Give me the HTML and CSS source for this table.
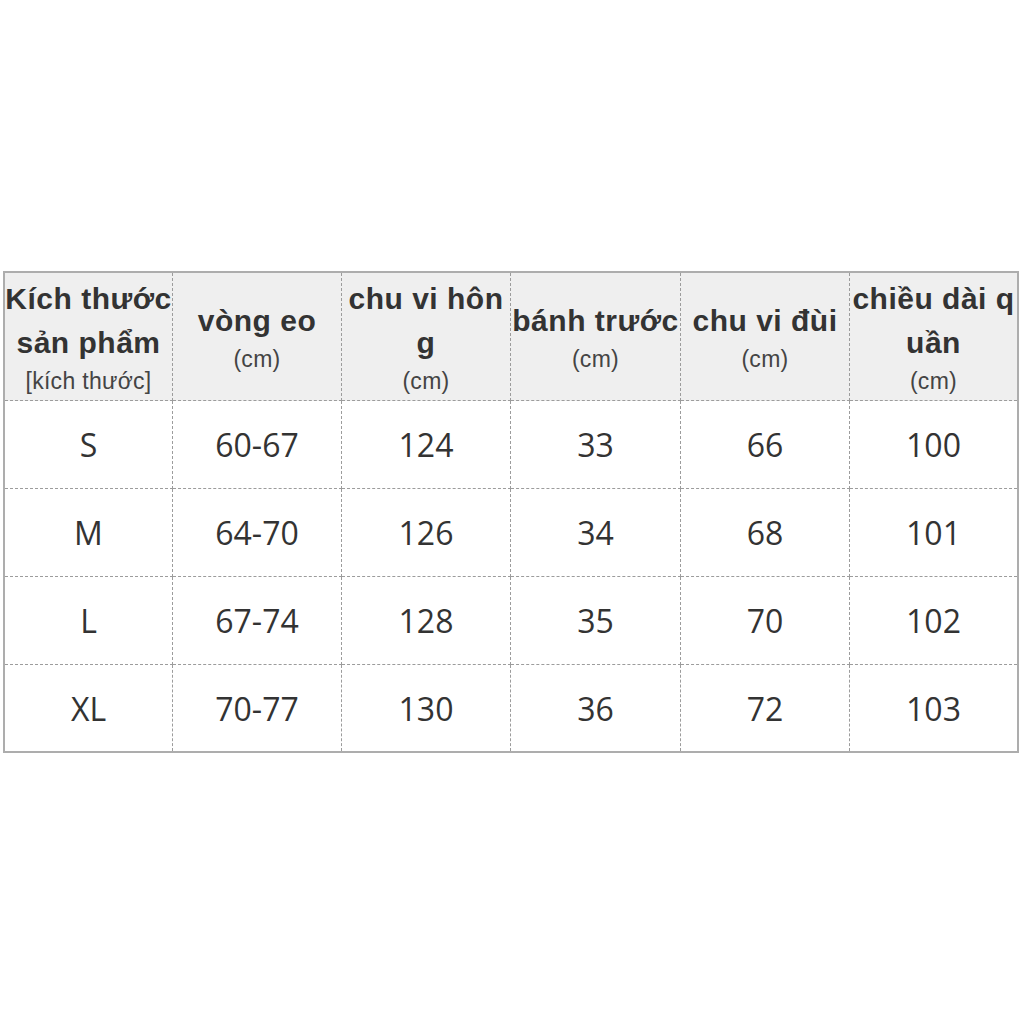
FILE: index.html
```html
<!DOCTYPE html>
<html lang="vi">
<head>
<meta charset="utf-8">
<title>Bảng kích thước</title>
<link rel="stylesheet" href="styles.css">
</head>
<body>
<div class="page">
  <div class="size-table">
    <div class="cell head"><span class="title">Kích thước<br>sản phẩm</span><span class="unit">[kích thước]</span></div>
    <div class="cell head"><span class="title">vòng eo</span><span class="unit">(cm)</span></div>
    <div class="cell head"><span class="title">chu vi hôn<br>g</span><span class="unit">(cm)</span></div>
    <div class="cell head"><span class="title">bánh trước</span><span class="unit">(cm)</span></div>
    <div class="cell head"><span class="title">chu vi đùi</span><span class="unit">(cm)</span></div>
    <div class="cell head"><span class="title">chiều dài q<br>uần</span><span class="unit">(cm)</span></div>

    <div class="cell">S</div><div class="cell">60-67</div><div class="cell">124</div><div class="cell">33</div><div class="cell">66</div><div class="cell">100</div>
    <div class="cell">M</div><div class="cell">64-70</div><div class="cell">126</div><div class="cell">34</div><div class="cell">68</div><div class="cell">101</div>
    <div class="cell">L</div><div class="cell">67-74</div><div class="cell">128</div><div class="cell">35</div><div class="cell">70</div><div class="cell">102</div>
    <div class="cell last">XL</div><div class="cell last">70-77</div><div class="cell last">130</div><div class="cell last">36</div><div class="cell last">72</div><div class="cell last">103</div>
  </div>
</div>
</body>
</html>
```
FILE: styles.css
```css
html, body {
  margin: 0;
  padding: 0;
  background: #ffffff;
}

.page {
  width: 1024px;
  height: 1024px;
  padding-top: 271px;
  padding-left: 3px;
  box-sizing: border-box;
}

.size-table {
  display: grid;
  grid-template-columns: 168px 169px 169px 170px 169px 1fr;
  grid-template-rows: 128px 88px 88px 88px 86px;
  width: 1016px;
  box-sizing: border-box;
  border: 2px solid #adadad;
  font-family: "Open Sans", "Noto Sans", sans-serif;
  color: #333333;
}

.cell {
  box-sizing: border-box;
  display: flex;
  flex-direction: column;
  align-items: center;
  justify-content: center;
  border-right: 1px dashed #9c9c9c;
  border-bottom: 1px dashed #9c9c9c;
  font-size: 32px;
  white-space: nowrap;
  text-align: center;
}

.cell:nth-child(6n) {
  border-right: none;
}

.cell.last {
  border-bottom: none;
}

.head {
  background: #efefef;
}

.title {
  font-family: "Liberation Sans", Arial, sans-serif;
  font-weight: bold;
  font-size: 30px;
  line-height: 44px;
  letter-spacing: 0.5px;
  color: #333333;
}

.unit {
  font-family: "Liberation Sans", Arial, sans-serif;
  font-size: 23px;
  line-height: 32px;
  letter-spacing: 0.3px;
  color: #444444;
}
```
